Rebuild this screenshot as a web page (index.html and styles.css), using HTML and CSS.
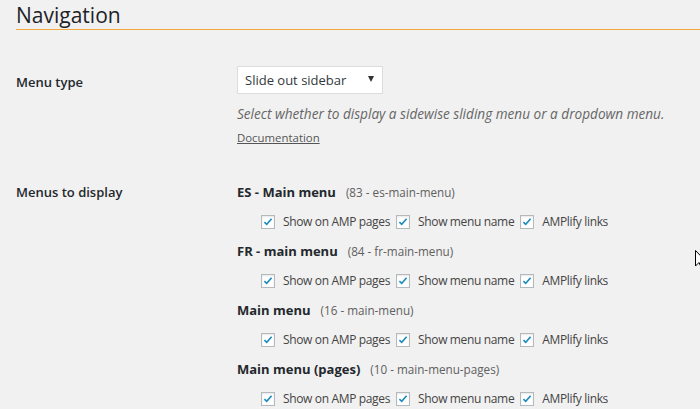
FILE: index.html
```html
<!DOCTYPE html>
<html>
<head>
<meta charset="utf-8">
<link rel="stylesheet" href="styles.css">
</head>
<body>
<div class="wrap">
  <h2 class="title">Navigation</h2>
  <div class="form">
    <div class="row row-type">
      <div class="label">Menu type</div>
      <div class="field">
        <div class="select"><span>Slide out sidebar</span><span class="arrow"></span></div>
        <p class="desc">Select whether to display a sidewise sliding menu or a dropdown menu.</p>
        <a class="doc" href="#">Documentation</a>
      </div>
    </div>
    <div class="row row-menus">
      <div class="label">Menus to display</div>
      <div class="field menus">
        <div class="menu">
          <div class="menu-name"><b>ES - Main menu</b><span class="slug">(83 - es-main-menu)</span></div>
          <div class="opts">
            <label class="opt"><span class="cb"><svg viewBox="0 0 16 16"><path d="M3.2 8.2 L6.3 11.2 L12.8 3.6" /></svg></span>Show on AMP pages</label>
            <label class="opt"><span class="cb"><svg viewBox="0 0 16 16"><path d="M3.2 8.2 L6.3 11.2 L12.8 3.6" /></svg></span>Show menu name</label>
            <label class="opt"><span class="cb"><svg viewBox="0 0 16 16"><path d="M3.2 8.2 L6.3 11.2 L12.8 3.6" /></svg></span>AMPlify links</label>
          </div>
        </div>
        <div class="menu">
          <div class="menu-name"><b>FR - main menu</b><span class="slug">(84 - fr-main-menu)</span></div>
          <div class="opts">
            <label class="opt"><span class="cb"><svg viewBox="0 0 16 16"><path d="M3.2 8.2 L6.3 11.2 L12.8 3.6" /></svg></span>Show on AMP pages</label>
            <label class="opt"><span class="cb"><svg viewBox="0 0 16 16"><path d="M3.2 8.2 L6.3 11.2 L12.8 3.6" /></svg></span>Show menu name</label>
            <label class="opt"><span class="cb"><svg viewBox="0 0 16 16"><path d="M3.2 8.2 L6.3 11.2 L12.8 3.6" /></svg></span>AMPlify links</label>
          </div>
        </div>
        <div class="menu">
          <div class="menu-name"><b>Main menu</b><span class="slug">(16 - main-menu)</span></div>
          <div class="opts">
            <label class="opt"><span class="cb"><svg viewBox="0 0 16 16"><path d="M3.2 8.2 L6.3 11.2 L12.8 3.6" /></svg></span>Show on AMP pages</label>
            <label class="opt"><span class="cb"><svg viewBox="0 0 16 16"><path d="M3.2 8.2 L6.3 11.2 L12.8 3.6" /></svg></span>Show menu name</label>
            <label class="opt"><span class="cb"><svg viewBox="0 0 16 16"><path d="M3.2 8.2 L6.3 11.2 L12.8 3.6" /></svg></span>AMPlify links</label>
          </div>
        </div>
        <div class="menu">
          <div class="menu-name"><b>Main menu (pages)</b><span class="slug">(10 - main-menu-pages)</span></div>
          <div class="opts">
            <label class="opt"><span class="cb"><svg viewBox="0 0 16 16"><path d="M3.2 8.2 L6.3 11.2 L12.8 3.6" /></svg></span>Show on AMP pages</label>
            <label class="opt"><span class="cb"><svg viewBox="0 0 16 16"><path d="M3.2 8.2 L6.3 11.2 L12.8 3.6" /></svg></span>Show menu name</label>
            <label class="opt"><span class="cb"><svg viewBox="0 0 16 16"><path d="M3.2 8.2 L6.3 11.2 L12.8 3.6" /></svg></span>AMPlify links</label>
          </div>
        </div>
      </div>
    </div>
  </div>
</div>
<svg class="cursor" viewBox="0 0 12 19" width="12" height="19"><path d="M0.5 0.5 L0.5 16 L4 12.5 L6.5 18 L8.5 17 L6 11.5 L11 11.5 Z" fill="#fff" stroke="#000" stroke-width="1"/></svg>
</body>
</html>
```

FILE: styles.css
```css
html, body {
  margin: 0;
  padding: 0;
  background: #f1f1f1;
  overflow: hidden;
}
body {
  font-family: "Open Sans", "Noto Sans", sans-serif;
  color: #23282d;
  font-size: 13px;
  position: relative;
  height: 409px;
}
.wrap {
  padding-left: 16px;
}
.title {
  margin: 0;
  padding-top: 2px;
  font-size: 21px;
  font-weight: 400;
  line-height: 27px;
  color: #1d2226;
  border-bottom: 1px solid #f4a73f;
  height: 30px;
  box-sizing: border-box;
}
.form {
  padding-top: 37px;
}
.row {
  display: grid;
  grid-template-columns: 221px 1fr;
}
.label {
  font-weight: 600;
  font-size: 13px;
  line-height: 20px;
}
.row-type .label {
  padding-top: 5px;
}
.select {
  width: 146px;
  height: 28px;
  margin-top: -1px;
  box-sizing: border-box;
  background: #fff;
  border: 1px solid #ddd;
  display: flex;
  align-items: center;
  justify-content: space-between;
  padding: 0 8px 0 7px;
  font-size: 13px;
  color: #32373c;
}
.arrow {
  width: 0;
  height: 0;
  border-left: 3px solid transparent;
  border-right: 3px solid transparent;
  border-top: 6px solid #333;
  margin-top: -2px;
}
.desc {
  margin: 10px 0 0;
  font-style: italic;
  color: #666;
  font-size: 13.6px;
  line-height: 20px;
}
.doc {
  display: inline-block;
  margin-top: 4px;
  color: #555;
  font-size: 11.4px;
  line-height: 20px;
  text-decoration: underline;
}
.row-menus {
  margin-top: 34px;
}
.menu {
  margin-bottom: 9px;
}
.menu-name {
  line-height: 20px;
}
.menu-name b {
  font-weight: 700;
  font-size: 13px;
}
.slug {
  margin-left: 10px;
  color: #606060;
  font-size: 11.7px;
}
.opts {
  display: flex;
  padding-left: 24px;
  margin-top: 10px;
  height: 20px;
  line-height: 20px;
  font-size: 12px;
  letter-spacing: -0.35px;
  color: #444;
}
.opt {
  display: flex;
  align-items: center;
  margin-right: 6px;
}
.cb {
  width: 14px;
  height: 14px;
  box-sizing: border-box;
  border: 1px solid #b4b9be;
  background: #fff;
  box-shadow: inset 0 1px 2px rgba(0,0,0,0.1);
  margin-right: 8px;
  display: inline-block;
}
.cb svg {
  display: block;
  width: 12px;
  height: 12px;
}
.cb path {
  fill: none;
  stroke: #1e8cbe;
  stroke-width: 2.2;
}
.cursor {
  position: absolute;
  left: 695px;
  top: 250px;
}
```
